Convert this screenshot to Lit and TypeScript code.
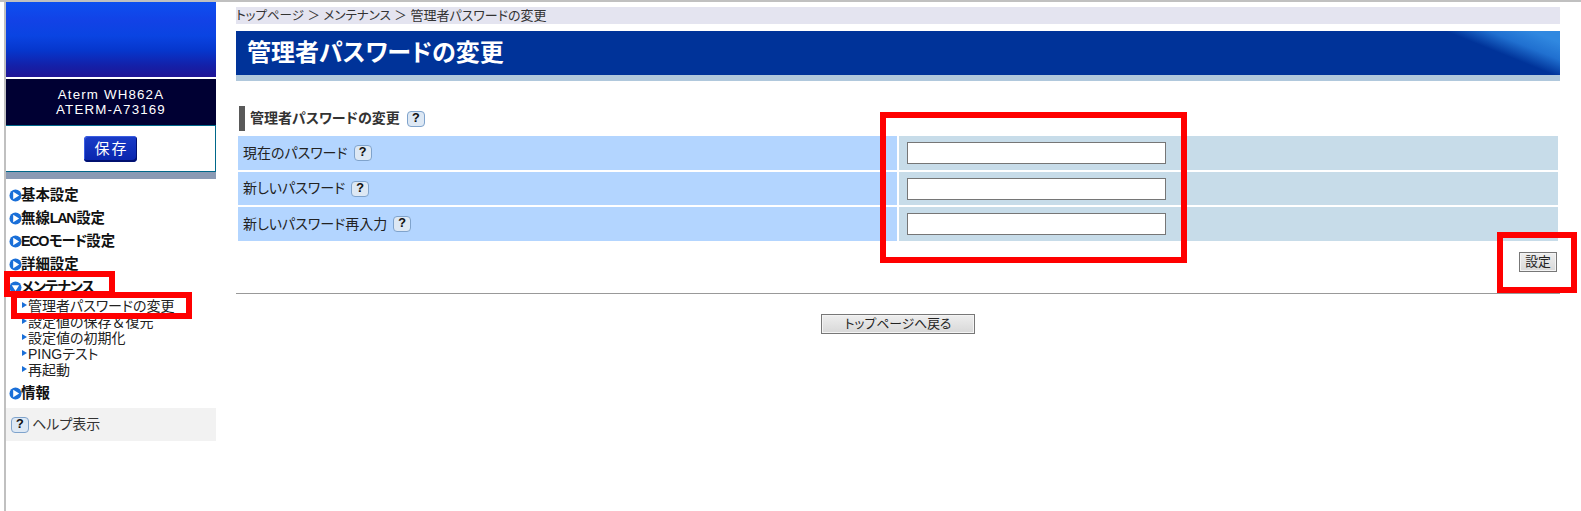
import { LitElement, html, css } from "lit";
import { customElement } from "lit/decorators.js";

const help = () => html`<span class="help">?</span>`;
const disc = (down = false) => html`<svg class="disc" viewBox="0 0 13 13" width="13" height="13">
  <circle cx="6.5" cy="6.5" r="6" fill="#1a6fd8"></circle>
  <path d=${down ? "M2.8 4.2H10.2L6.5 10Z" : "M4.2 2.8L10.2 6.5L4.2 10.2Z"} fill="#fff"></path>
</svg>`;

@customElement("app-root")
export class AppRoot extends LitElement {
  static styles = css`
    :host {
      display: block;
      position: relative;
      height: 511px;
      overflow: hidden;
      background: #fff;
      font-family: "Liberation Sans", "Noto Sans CJK JP", sans-serif;
      font-size: 14px;
      font-feature-settings: "palt";
      color: #222;
    }
    .page {
      display: flex;
      height: 509px;
      border-top: 2px solid #c0c0c0;
    }
    .side {
      width: 210px;
      margin-left: 4px;
      border-left: 2px solid #c0c0c0;
      flex: none;
    }
    .logo {
      height: 75px;
      background: linear-gradient(#0d4ff0 0%, #1242e6 25%, #0a44e2 45%, #0636cc 65%, #1420a8 85%, #201496 100%);
    }
    .device {
      margin-top: 2px;
      height: 46px;
      background: #000033;
      color: #fff;
      display: flex;
      flex-direction: column;
      align-items: center;
      justify-content: center;
      font-size: 13.33px;
      line-height: 15px;
      letter-spacing: 1.15px;
    }
    .save-box {
      background: #fff;
      border: 1px solid #00688a;
      border-left: none;
      box-sizing: border-box;
      height: 47px;
      display: flex;
      justify-content: center;
      padding-top: 10px;
    }
    .save {
      width: 53px;
      height: 26px;
      box-sizing: border-box;
      border-radius: 4px;
      background: linear-gradient(#1a3cc8, #0824ac);
      box-shadow: inset -1px -2px 0 #001070, inset 1px 1px 0 #3a5ce0;
      color: #fff;
      font-size: 15px;
      line-height: 25px;
      letter-spacing: 2px;
      text-align: center;
      padding-left: 2px;
    }
    .band {
      height: 7px;
      background: #8a9ab4;
    }
    .nav {
      padding-top: 5px;
    }
    .item {
      display: flex;
      align-items: center;
      height: 23px;
      padding-left: 3px;
      font-size: 14.4px;
      font-weight: 700;
      color: #111;
      line-height: 23px;
    }
    .disc {
      flex: none;
      margin-right: -1px;
    }
    .tight {
      letter-spacing: -1.4px;
      margin-right: 1px;
    }
    .kana {
      letter-spacing: -1px;
    }
    .full {
      font-feature-settings: normal;
    }
    .sub {
      margin-top: -1px;
      padding-bottom: 4px;
    }
    .sub div {
      display: flex;
      align-items: center;
      height: 16px;
      padding-left: 16px;
      line-height: 16px;
      color: #222;
      white-space: nowrap;
    }
    .sub div::before {
      content: "";
      border-left: 5px solid #1a6fd8;
      border-top: 3.5px solid transparent;
      border-bottom: 3.5px solid transparent;
      margin-right: 1px;
      position: relative;
      top: -1px;
    }
    .helpbar {
      margin-top: 3px;
      height: 33px;
      background: #f2f2f2;
      display: flex;
      align-items: center;
      gap: 3px;
      padding-left: 5px;
      color: #333;
    }
    .help {
      display: inline-block;
      box-sizing: border-box;
      width: 18px;
      height: 16px;
      border: 1px solid #7fa3cc;
      border-radius: 4px;
      background: #dde8f4;
      color: #111;
      font: 700 13px/14px "Liberation Mono", monospace;
      text-align: center;
      flex: none;
    }
    .main {
      margin-left: 20px;
      width: 1324px;
      padding-top: 5px;
      flex: none;
    }
    .crumb {
      height: 17px;
      line-height: 17px;
      background: #e4e4f0;
      color: #333;
      font-size: 12.5px;
      white-space: pre;
    }
    .crumb span {
      font-size: 13px;
    }
    .title {
      margin-top: 7px;
      height: 44px;
      box-sizing: border-box;
      padding-left: 11px;
      background: linear-gradient(22deg, #003399 92%, #2070d0 95%, #3088e0 98%);
      color: #fff;
      font-size: 24px;
      font-weight: 700;
      line-height: 44px;
    }
    .titlebar {
      height: 6px;
      background: #b0c8dc;
    }
    .heading {
      margin: 25px 0 5px 3px;
      height: 25px;
      box-sizing: border-box;
      border-left: 6px solid #595959;
      padding-left: 5px;
      display: flex;
      align-items: center;
      gap: 7px;
      font-weight: 700;
      color: #333;
    }
    .txt {
      margin-bottom: 3px;
    }
    .form {
      margin: 0 2px;
      display: grid;
      grid-template-columns: 659px 659px;
      grid-template-rows: 34px 33px 34px;
      gap: 2px;
    }
    .label {
      background: #b3d5ff;
      display: flex;
      align-items: center;
      gap: 6px;
      padding-left: 5px;
      color: #222;
    }
    .value {
      background: #c7dce9;
      display: flex;
      align-items: center;
      padding-left: 8px;
    }
    .value input {
      width: 259px;
      height: 22px;
      box-sizing: border-box;
      border: 1px solid #767676;
      background: #fff;
      margin: 0;
      padding: 0;
    }
    .actions {
      display: flex;
      justify-content: flex-end;
      padding: 11px 3px 0 0;
    }
    .btn {
      box-sizing: border-box;
      height: 20px;
      border: 1px solid #777;
      box-shadow: inset 0 0 0 1px #f4f4f4;
      background: linear-gradient(#eeeeee, #d8d8d8);
      color: #222;
      font: inherit;
      font-size: 12.8px;
      line-height: 18px;
      padding: 0;
      text-align: center;
    }
    .set {
      width: 38px;
    }
    .rule {
      margin-top: 21px;
      height: 1px;
      background: #999;
    }
    .back-row {
      display: flex;
      justify-content: center;
      padding-top: 20px;
    }
    .back {
      width: 154px;
    }
    .mark {
      position: absolute;
      box-sizing: border-box;
      border: 6px solid #ff0000;
      pointer-events: none;
    }
    .m1 { left: 880px; top: 112px; width: 307px; height: 151px; }
    .m2 { left: 1497px; top: 232px; width: 80px; height: 61px; }
    .m3 { left: 4px; top: 271px; width: 111px; height: 26px; }
    .m4 { left: 11px; top: 292px; width: 181px; height: 27px; }
  `;

  render() {
    return html`
      <div class="page">
        <aside class="side">
          <div class="logo"></div>
          <div class="device"><span>Aterm WH862A</span><span>ATERM-A73169</span></div>
          <div class="save-box"><div class="save">保存</div></div>
          <div class="band"></div>
          <nav class="nav">
            <div class="item">${disc()}基本設定</div>
            <div class="item">${disc()}無線<span class="tight">LAN</span>設定</div>
            <div class="item">${disc()}<span class="tight">ECO</span><span class="kana">モード</span>設定</div>
            <div class="item">${disc()}詳細設定</div>
            <div class="item">${disc(true)}<span class="kana">メンテナンス</span></div>
            <div class="sub">
              <div>管理者パスワードの変更</div>
              <div>設定値の保存<span class="full">＆</span>復元</div>
              <div>設定値の初期化</div>
              <div>PINGテスト</div>
              <div>再起動</div>
            </div>
            <div class="item">${disc()}情報</div>
          </nav>
          <div class="helpbar">${help()}<span class="txt">ヘルプ表示</span></div>
        </aside>
        <main class="main">
          <div class="crumb">トップページ ＞ メンテナンス ＞<span> 管理者パスワードの変更</span></div>
          <div class="title">管理者パスワードの変更</div>
          <div class="titlebar"></div>
          <div class="heading"><span class="txt">管理者パスワードの変更</span> ${help()}</div>
          <div class="form">
            <div class="label"><span class="txt">現在のパスワード</span> ${help()}</div>
            <div class="value"><input type="password" /></div>
            <div class="label"><span class="txt">新しいパスワード</span> ${help()}</div>
            <div class="value"><input type="password" /></div>
            <div class="label"><span class="txt">新しいパスワード再入力</span> ${help()}</div>
            <div class="value"><input type="password" /></div>
          </div>
          <div class="actions"><button class="btn set">設定</button></div>
          <div class="rule"></div>
          <div class="back-row"><button class="btn back">トップページへ戻る</button></div>
        </main>
      </div>
      <div class="mark m1"></div>
      <div class="mark m2"></div>
      <div class="mark m3"></div>
      <div class="mark m4"></div>
    `;
  }
}
